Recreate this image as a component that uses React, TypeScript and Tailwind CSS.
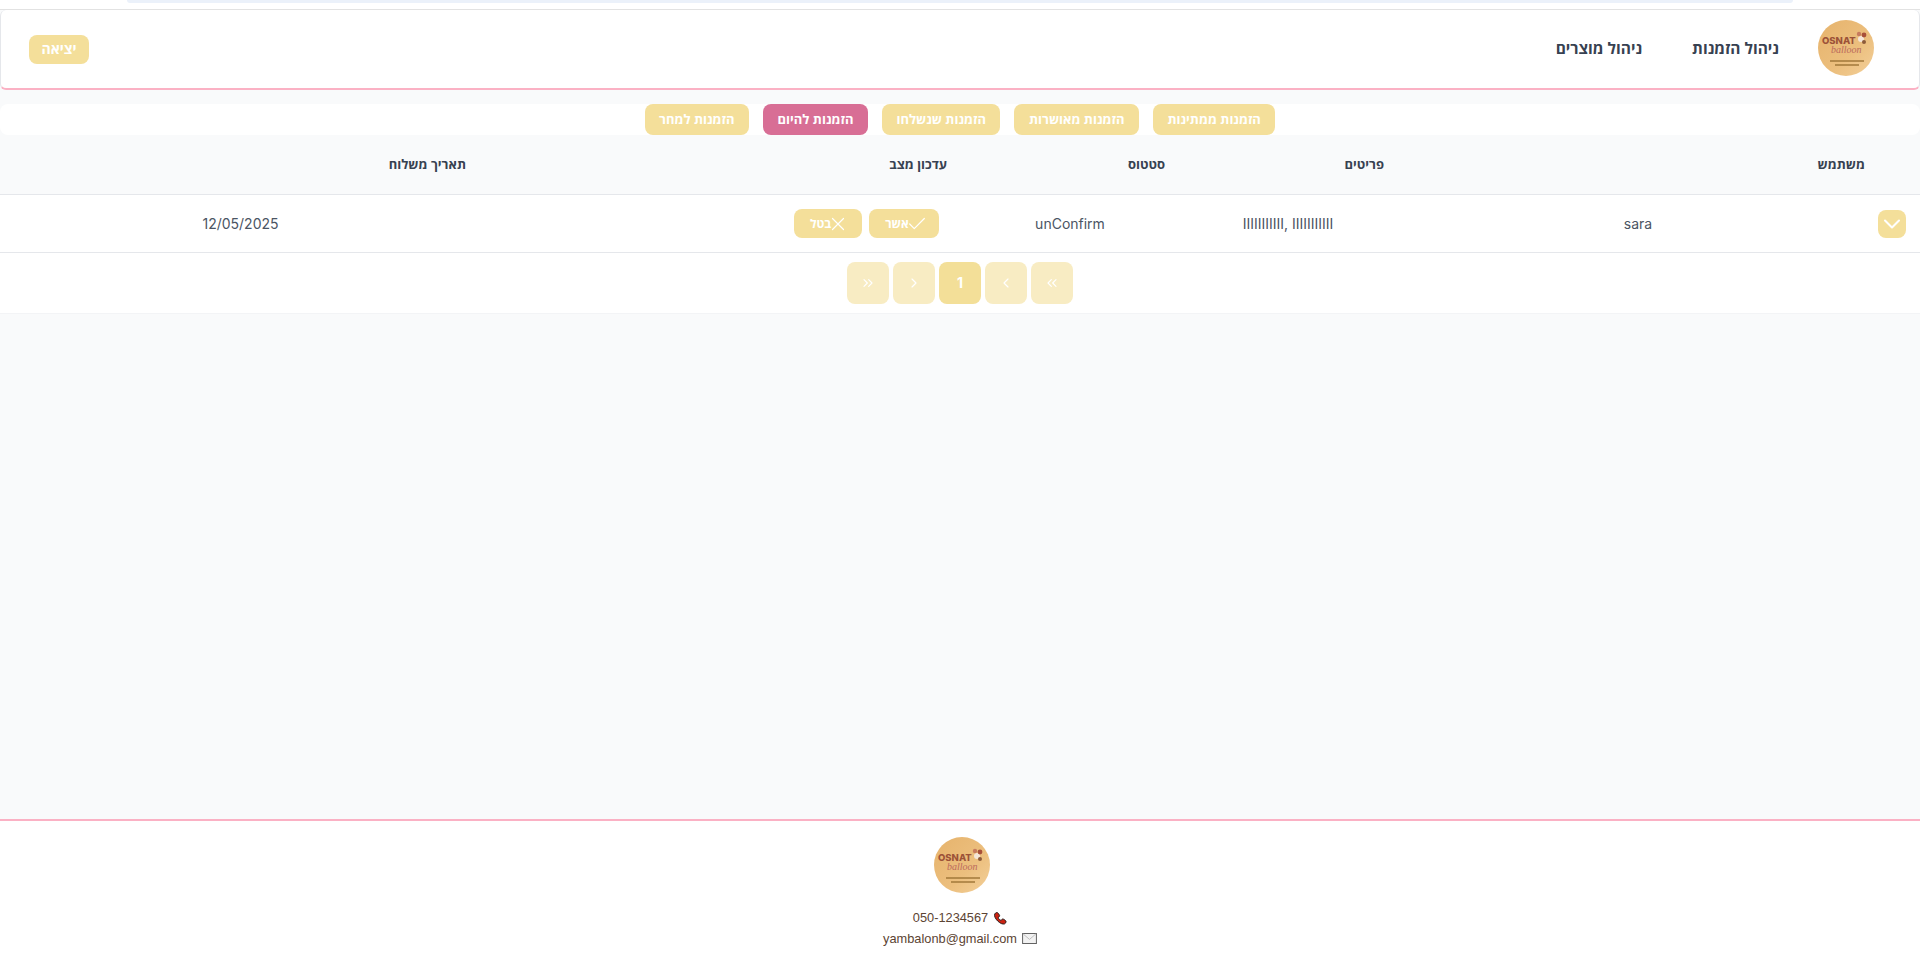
import React from 'react';
import { Check, ChevronDown, ChevronLeft, ChevronRight, ChevronsLeft, ChevronsRight, X } from 'lucide-react';

const tabs = ['הזמנות ממתינות', 'הזמנות מאושרות', 'הזמנות שנשלחו', 'הזמנות להיום', 'הזמנות למחר'];

function Logo() {
  return (
    <svg viewBox="0 0 56 56" className="w-14 h-14 shrink-0 [direction:ltr]">
      <defs>
        <linearGradient id="logoGold" x1="0" y1="0" x2="1" y2="1">
          <stop offset="0" stopColor="#e6b36c" />
          <stop offset="0.6" stopColor="#ecbf7e" />
          <stop offset="1" stopColor="#f3d09a" />
        </linearGradient>
      </defs>
      <circle cx="28" cy="28" r="28" fill="url(#logoGold)" />
      <text x="4" y="24" direction="ltr" fontSize="9.5" fontWeight="800" fontFamily="Inter, sans-serif" fill="#9c5238">OSNAT</text>
      <text x="13" y="33" direction="ltr" fontSize="10" fontStyle="italic" fontFamily="'Liberation Serif', serif" fill="#bb6a5c">balloon</text>
      <circle cx="43" cy="19" r="3" fill="#f5e6d8" />
      <circle cx="46" cy="15" r="2.4" fill="#a8503a" />
      <circle cx="41" cy="14" r="2.2" fill="#c77a5e" />
      <circle cx="46" cy="22" r="2" fill="#8c5a3a" />
      <rect x="12" y="40" width="34" height="2" fill="#9c7434" opacity="0.7" />
      <rect x="17" y="44" width="24" height="2" fill="#9c7434" opacity="0.7" />
    </svg>
  );
}

function PageButton({ children, active }: { children: React.ReactNode; active?: boolean }) {
  return (
    <button
      className={`w-[42px] h-[42px] rounded-lg flex items-center justify-center text-white font-bold text-sm ${
        active ? 'bg-[#f3df98]' : 'bg-[#f8ecc3]'
      }`}
    >
      {children}
    </button>
  );
}

export default function App() {
  return (
    <div
      dir="rtl"
      className="w-full h-[960px] flex flex-col bg-[#f9fafb] overflow-hidden font-['Inter','Open_Sans',sans-serif]"
    >
      <div className="h-[10px] bg-white shrink-0 flex justify-center border-b border-[#e2e2e2]">
        <div className="w-[1666px] h-[3px] bg-[#ebf1fa] rounded-b-xl"></div>
      </div>

      <header className="h-[80px] shrink-0 bg-white rounded-md border border-[#e5e7eb] border-t-0 border-b-2 border-b-[#fbb1c4] flex items-center justify-between pr-[45px] pl-[28px]">
        <nav className="flex items-center font-['Open_Sans',sans-serif]">
          <div className="mb-[3px]">
            <Logo />
          </div>
          <a className="mr-[39px] text-[15.5px] font-bold text-[#374151]">ניהול הזמנות</a>
          <a className="mr-[50px] text-[15.5px] font-bold text-[#374151]">ניהול מוצרים</a>
        </nav>
        <button className="w-[60px] h-[29px] rounded-lg bg-[#f4df9a] text-white text-sm font-bold font-['Open_Sans',sans-serif]">יציאה</button>
      </header>

      <div className="mt-[14px] h-[31px] shrink-0 bg-white rounded-lg flex justify-center gap-[14px]">
        {tabs.map(tab => (
          <button
            key={tab}
            className={`h-[31px] px-[14.5px] rounded-lg text-white text-[13px] font-bold font-['Open_Sans',sans-serif] ${
              tab === 'הזמנות להיום' ? 'bg-[#d86e95]' : 'bg-[#f4df9a]'
            }`}
          >
            {tab}
          </button>
        ))}
      </div>

      <div className="h-[60px] shrink-0 grid grid-cols-[481px_219px_218px_481px_1fr] items-center pr-[55px] border-b border-[#e5e7eb] text-[13px] font-bold text-[#374151] font-['Open_Sans',sans-serif]">
        <div>משתמש</div>
        <div>פריטים</div>
        <div>סטטוס</div>
        <div>עדכון מצב</div>
        <div>תאריך משלוח</div>
      </div>

      <div className="h-[58px] shrink-0 bg-white grid grid-cols-[60px_444px_256px_180px_227px_1fr] items-center text-center text-sm text-[#4b5563] border-b border-[#e5e7eb]">
        <div className="pr-[14px]">
          <button className="w-7 h-7 rounded-lg bg-[#f4df9a] text-white flex items-center justify-center">
            <ChevronDown size={28} strokeWidth={1.75} />
          </button>
        </div>
        <div>sara</div>
        <div dir="ltr">IIIIIIIIIII, IIIIIIIIIII</div>
        <div>unConfirm</div>
        <div className="flex justify-center gap-[7px] font-['Open_Sans',sans-serif]">
          <button className="w-[70px] h-[29px] rounded-lg bg-[#f4df9a] text-white text-xs font-bold flex items-center justify-center pl-[5px]">
            <Check size={22} strokeWidth={1.3} className="-ml-[3px]" />
            אשר
          </button>
          <button className="w-[68px] h-[29px] rounded-lg bg-[#f4df9a] text-white text-xs font-bold flex items-center justify-center pl-[3px]">
            <X size={22} strokeWidth={1.3} className="-ml-[4px]" />
            בטל
          </button>
        </div>
        <div className="pr-[272px]">12/05/2025</div>
      </div>

      <div className="h-[61px] shrink-0 bg-white border-b border-[#f3f4f6] flex items-center justify-center gap-1">
        <PageButton><ChevronsLeft size={16} strokeWidth={1.75} /></PageButton>
        <PageButton><ChevronLeft size={16} strokeWidth={1.75} /></PageButton>
        <PageButton active>1</PageButton>
        <PageButton><ChevronRight size={16} strokeWidth={1.75} /></PageButton>
        <PageButton><ChevronsRight size={16} strokeWidth={1.75} /></PageButton>
      </div>

      <div className="flex-1"></div>

      <footer className="h-[141px] shrink-0 bg-white border-t-2 border-[#fbb1c4] flex flex-col items-center pt-4 text-[12.8px] text-[#5c4433] font-['Liberation_Sans',sans-serif]">
        <div className="translate-x-[2px]">
          <Logo />
        </div>
        <div className="mt-[14px] flex items-center gap-[5px] h-[21px]">
          <svg viewBox="0 0 24 24" className="w-[14px] h-[14px]">
            <path
              d="M3 5c2-3 5-3 6-1l2 3c1 1 0 3-2 4 0 2 3 5 5 5 1-2 3-3 4-2l3 2c2 1 2 4-1 6-6 3-20-10-17-17z"
              fill="#cc2211"
              stroke="#1f1f1f"
              strokeWidth="1.6"
            />
          </svg>
          <span dir="ltr">050-1234567</span>
        </div>
        <div className="flex items-center gap-[5px] h-[21px]">
          <svg viewBox="0 0 16 12" className="w-[15px] h-[11px]">
            <rect x="0.5" y="0.5" width="15" height="11" fill="#f2f2f2" stroke="#555555" />
            <path d="M1 1l7 6 7-6" fill="none" stroke="#bbbbbb" />
          </svg>
          <span dir="ltr">yambalonb@gmail.com</span>
        </div>
      </footer>
    </div>
  );
}
